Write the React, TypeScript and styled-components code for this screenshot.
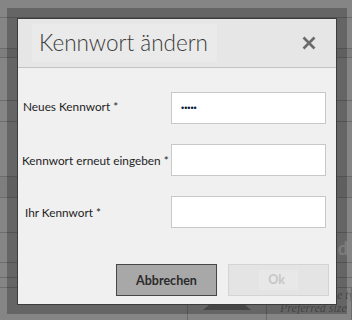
import styled, { createGlobalStyle } from 'styled-components'

const GlobalStyle = createGlobalStyle`
  html, body {
    margin: 0;
    padding: 0;
    background: #858585;
    overflow: hidden;
  }
`

const Screen = styled.div`
  position: relative;
  width: 352px;
  height: 320px;
  overflow: hidden;
  font-family: Lato, 'Open Sans', sans-serif;
`

// page underneath the modal
const Page = styled.div`
  display: flex;
  flex-direction: column;
  height: 100%;
  background: #858585;
`

const PageRow = styled.div<{ h: number; tone?: string }>`
  height: ${(p) => p.h}px;
  flex: none;
  background: ${(p) => p.tone || '#858585'};
  border-bottom: 1px solid #6c6c6c;
  display: flex;
  justify-content: flex-end;
  align-items: center;
`

const PageLabel = styled.span`
  font-size: 18px;
  font-weight: 700;
  color: #a3a3a3;
  margin-right: 4px;
`

const PageBottom = styled.div`
  flex: 1;
  display: grid;
  grid-template-columns: 188px 79px 1fr;
`

const Cell = styled.div`
  border-right: 1px solid #6c6c6c;
  position: relative;
  overflow: hidden;
`

const Arrow = styled.div`
  width: 0;
  height: 0;
  margin: 2px auto 0;
  border-left: 24px solid transparent;
  border-right: 24px solid transparent;
  border-bottom: 20px solid #5c5c5c;
`

const Hint = styled.div`
  font-family: 'Liberation Serif', serif;
  font-style: italic;
  font-size: 12px;
  line-height: 12px;
  color: #5a5a5a;
  white-space: nowrap;
  overflow: hidden;
  padding-left: 13px;
  padding-top: 1px;
`

// modal layer
const Overlay = styled.div`
  position: absolute;
  inset: 0;
`

const Frame = styled.div`
  position: absolute;
  left: 7px;
  top: 8px;
  width: 340px;
  height: 306px;
  box-sizing: border-box;
  padding: 10px 10px 9px 10px;
  background: rgba(0, 0, 0, 0.24);
  display: flex;
`

const Dialog = styled.div`
  flex: 1;
  display: flex;
  flex-direction: column;
  background: #f0f0f0;
  border: 1px solid #3c3c3c;
`

const Header = styled.div`
  height: 48px;
  flex: none;
  background: #e6e6e6;
  border-bottom: 1px solid #c4c4c4;
  display: flex;
  align-items: center;
  padding: 0 20px 0 14px;
`

const Title = styled.h1`
  margin: 0;
  height: 38px;
  width: 185px;
  box-sizing: border-box;
  padding-left: 7px;
  background: #eaeaea;
  font-size: 22.5px;
  font-weight: 300;
  line-height: 38px;
  color: #3a3a3a;
  white-space: nowrap;
`

const Close = styled.button`
  margin-left: auto;
  width: 14px;
  height: 14px;
  padding: 0;
  border: 0;
  background: none;
  display: flex;
`

const Form = styled.div`
  display: grid;
  grid-template-columns: 153px 155px;
  grid-auto-rows: 32px;
  row-gap: 20px;
  padding: 24px 0 0 0;
`

const Label = styled.label<{ indent: number; lift?: number }>`
  align-self: center;
  padding-left: ${(p) => p.indent}px;
  margin-bottom: ${(p) => (p.lift || 0) * 2}px;
  font-size: 11.8px;
  color: #1e1e1e;
  white-space: nowrap;
`

const Input = styled.input`
  box-sizing: border-box;
  width: 155px;
  height: 32px;
  margin: 0;
  border: 1px solid #c8c8c8;
  background: #fff;
  padding: 0 9px;
  font-size: 9px;
  letter-spacing: 0;
  color: #0a1a3a;
  outline: none;
`

const Footer = styled.div`
  margin-top: auto;
  display: flex;
  justify-content: flex-end;
  gap: 11px;
  padding: 0 7px 8px 0;
`

const Button = styled.button<{ primary?: boolean }>`
  width: 101px;
  height: 32px;
  box-sizing: border-box;
  margin: 0;
  padding: 0;
  font-family: Lato, 'Open Sans', sans-serif;
  font-size: 12.5px;
  font-weight: 700;
  background: ${(p) => (p.primary ? '#a8a8a8' : '#e4e4e4')};
  border: 1px solid ${(p) => (p.primary ? '#474747' : '#d4d4d4')};
  color: ${(p) => (p.primary ? '#2b2b2b' : '#c6c6c6')};
  display: flex;
  align-items: center;
  justify-content: center;
`

const OkInner = styled.span`
  display: inline-block;
  padding: 2px 13px 3px 9px;
  background: #e8e8e8;
`

export default function App() {
  return (
    <Screen>
      <GlobalStyle />
      <Page>
        <PageRow h={17} />
        <PageRow h={30} />
        <PageRow h={8} tone="#7e7e7e" />
        <PageRow h={42} />
        <PageRow h={20} />
        <PageRow h={54} />
        <PageRow h={20} tone="#7e7e7e" />
        <PageRow h={34} />
        <PageRow h={29}>
          <PageLabel>Upload</PageLabel>
        </PageRow>
        <PageRow h={14} />
        <PageRow h={9} />
        <PageBottom>
          <Cell />
          <Cell>
            <Arrow />
          </Cell>
          <Cell>
            <Hint>Accepted file types</Hint>
            <Hint>Preferred size</Hint>
          </Cell>
        </PageBottom>
      </Page>

      <Overlay>
        <Frame>
          <Dialog>
            <Header>
              <Title>Kennwort ändern</Title>
              <Close aria-label="Schließen">
                <svg width="14" height="14" viewBox="0 0 14 14">
                  <path
                    d="M1.5 1.5 L12.5 12.5 M12.5 1.5 L1.5 12.5"
                    stroke="#6a6a6a"
                    strokeWidth="2.6"
                  />
                </svg>
              </Close>
            </Header>
            <Form>
              <Label indent={5} lift={2}>Neues Kennwort *</Label>
              <Input type="password" defaultValue="12345" readOnly />
              <Label indent={4}>Kennwort erneut eingeben *</Label>
              <Input type="password" />
              <Label indent={7}>Ihr Kennwort *</Label>
              <Input type="password" />
            </Form>
            <Footer>
              <Button primary>Abbrechen</Button>
              <Button>
                <OkInner>Ok</OkInner>
              </Button>
            </Footer>
          </Dialog>
        </Frame>
      </Overlay>
    </Screen>
  )
}
